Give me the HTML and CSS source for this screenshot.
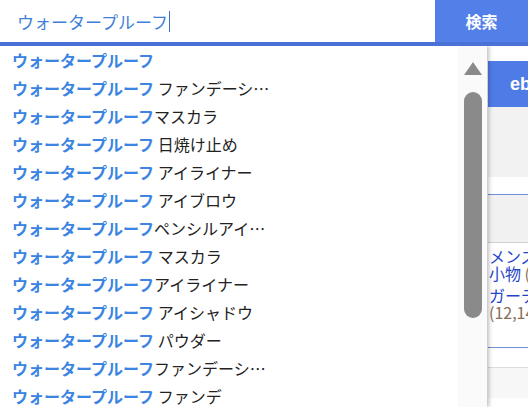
FILE: index.html
```html
<!DOCTYPE html>
<html lang="ja">
<head>
  <meta charset="UTF-8">
  <meta name="viewport" content="width=device-width, initial-scale=1.0">
  <title>検索</title>
  <link rel="stylesheet" href="styles.css">
</head>
<body>
  <div class="search-bar">
    <div class="search-input">ウォータープルーフ<span class="caret"></span></div>
    <button class="search-btn">検索</button>
  </div>
  <div class="bar-line"></div>

  <div class="page">
    <div class="page-main"></div>
    <div class="page-side">
      <div class="side-btn">eb</div>
      <div class="side-grey"></div>
      <div class="side-tabs"></div>
      <div class="side-list">
        <div class="side-item">
          <span class="side-link">メンズ</span>
          <span class="side-link">小物 <span class="side-count">(</span></span>
        </div>
        <div class="side-item">
          <span class="side-link">ガーデ</span>
          <span class="side-count">(12,14</span>
        </div>
      </div>
      <div class="side-gap"></div>
      <div class="side-foot"></div>
    </div>

    <div class="suggest">
      <ul class="suggest-list">
        <li><b>ウォータープルーフ</b></li>
        <li><b>ウォータープルーフ</b> ファンデーシ…</li>
        <li><b>ウォータープルーフ</b>マスカラ</li>
        <li><b>ウォータープルーフ</b> 日焼け止め</li>
        <li><b>ウォータープルーフ</b> アイライナー</li>
        <li><b>ウォータープルーフ</b> アイブロウ</li>
        <li><b>ウォータープルーフ</b>ペンシルアイ…</li>
        <li><b>ウォータープルーフ</b> マスカラ</li>
        <li><b>ウォータープルーフ</b>アイライナー</li>
        <li><b>ウォータープルーフ</b> アイシャドウ</li>
        <li><b>ウォータープルーフ</b> パウダー</li>
        <li><b>ウォータープルーフ</b>ファンデーシ…</li>
        <li><b>ウォータープルーフ</b> ファンデ</li>
      </ul>
      <div class="scroll-track">
        <div class="scroll-up"></div>
        <div class="scroll-thumb"></div>
      </div>
    </div>
  </div>
</body>
</html>
```

FILE: styles.css
```css
* {
  box-sizing: border-box;
}
body {
  margin: 0;
  width: 528px;
  height: 407px;
  overflow: hidden;
  background: #fff;
  font-family: "Noto Sans CJK JP", "Noto Sans", sans-serif;
  color: #222;
}
.search-bar {
  display: flex;
  height: 42px;
}
.search-input {
  flex: 1;
  display: flex;
  align-items: center;
  padding-left: 17px;
  font-size: 17px;
  color: #3f7fd8;
}
.caret {
  display: inline-block;
  width: 1px;
  height: 21px;
  margin-left: 1px;
  background: #3a6fcc;
}
.search-btn {
  width: 93px;
  border: none;
  background: #527fe8;
  color: #fff;
  font-family: inherit;
  font-size: 16px;
  font-weight: bold;
}
.bar-line {
  height: 4px;
  background: #4a72d6;
}
.page {
  position: relative;
  display: flex;
  height: 361px;
  overflow: hidden;
}
.page-main {
  width: 488px;
}
.page-side {
  flex: 1;
  overflow: hidden;
  padding-top: 15px;
}
.side-btn {
  height: 46px;
  background: #4f7be6;
  color: #fff;
  font-family: "Liberation Sans", sans-serif;
  font-weight: bold;
  font-size: 18px;
  line-height: 46px;
  padding-left: 22px;
}
.side-grey {
  height: 70px;
  background: #f2f2f2;
}
.side-tabs {
  height: 49px;
  margin-top: 17px;
  border-top: 1px solid #6f8fd6;
  border-bottom: 1px solid #cfcfcf;
  background: #f1f1f1;
}
.side-list {
  height: 105px;
  padding: 5px 0 0 1px;
  border-bottom: 1px solid #6f8fd6;
}
.side-item {
  display: flex;
  flex-direction: column;
  margin-bottom: 5px;
}
.side-link,
.side-count {
  white-space: nowrap;
  font-size: 16px;
  line-height: 17px;
  color: #1f45c8;
}
.side-count {
  color: #8a6d55;
}
.side-gap {
  height: 20px;
  border-bottom: 1px solid #dcdcdc;
}
.side-foot {
  height: 30px;
  background: #f7f7f7;
}
.suggest {
  position: absolute;
  top: 0;
  left: 0;
  width: 487px;
  height: 361px;
  display: flex;
  background: #fff;
  box-shadow: 2px 0 4px rgba(0, 0, 0, 0.25);
}
.suggest-list {
  flex: 1;
  list-style: none;
  margin: 0;
  padding: 0;
}
.suggest-list li {
  height: 28px;
  line-height: 28px;
  padding-left: 12px;
  font-size: 16px;
  white-space: nowrap;
}
.suggest-list b {
  color: #3b84e2;
}
.scroll-track {
  width: 29px;
  padding: 16px 5px 0 6px;
  background: #fafafa;
}
.scroll-up {
  width: 0;
  height: 0;
  margin: 0 auto;
  border-left: 9px solid transparent;
  border-right: 9px solid transparent;
  border-bottom: 13px solid #8a8a8a;
}
.scroll-thumb {
  height: 226px;
  margin-top: 17px;
  border-radius: 9px;
  background: #8a8a8a;
}
```
